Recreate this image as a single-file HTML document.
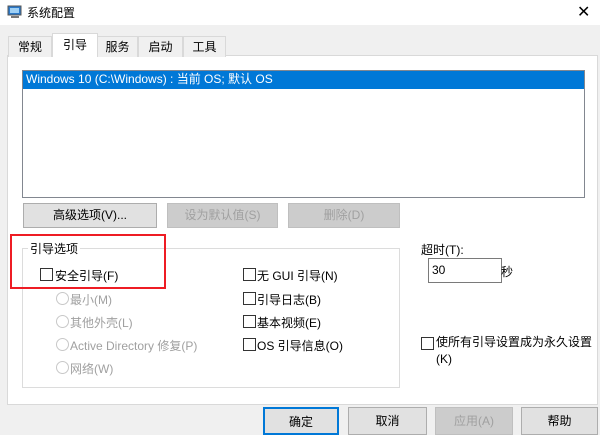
<!DOCTYPE html>
<html><head><meta charset="utf-8"><style>
*{margin:0;padding:0;box-sizing:border-box}
body{width:600px;height:434px;overflow:hidden;background:#f0f0f0;font-family:"Liberation Sans","Noto Sans CJK SC",sans-serif;font-size:12px;color:#000;position:relative}
.a{position:absolute}
.title{left:0;top:0;width:600px;height:25px;background:#fff}
.tab{position:absolute;top:36px;height:21px;border:1px solid #d9d9d9;border-bottom:none;background:#f0f0f0;text-align:center;line-height:20px}
.btn{position:absolute;height:25px;border:1px solid #adadad;background:#e1e1e1;text-align:center;line-height:23px}
.dis{color:#a0a0a0;background:#cccccc;border-color:#bfbfbf}
.cb{position:absolute;width:13px;height:13px;border:1px solid #333;background:#fff}
.rd{position:absolute;width:13px;height:13px;border:1px solid #c8c8c8;border-radius:50%;background:#fff}
.g{color:#a0a0a0}
</style></head><body>
<div class="a title"></div>
<svg class="a" style="left:7px;top:4px" width="16" height="16"><rect x="1" y="2" width="13" height="9" fill="#2b79c9" stroke="#555"/><rect x="3" y="4" width="9" height="5" fill="#9fd0f5"/><rect x="4" y="12" width="8" height="2" fill="#777"/></svg>
<div class="a" style="left:27px;top:4px;font-size:12px">系统配置</div>
<div class="a" style="left:577px;top:2px;font-size:16px;font-weight:300">✕</div>
<div class="a" style="left:7px;top:55px;width:591px;height:350px;background:#fff;border:1px solid #d9d9d9"></div>
<div class="tab" style="left:8px;width:44px">常规</div>
<div class="tab" style="left:97px;width:41px">服务</div>
<div class="tab" style="left:138px;width:45px">启动</div>
<div class="tab" style="left:183px;width:43px">工具</div>
<div class="tab" style="left:52px;top:33px;height:24px;width:46px;background:#fff;line-height:22px">引导</div>
<div class="a" style="left:22px;top:70px;width:563px;height:128px;border:1px solid #828790;background:#fff"></div>
<div class="a" style="left:23px;top:71px;width:561px;height:18px;background:#0078d7;color:#fff;line-height:17px;padding-left:3px">Windows 10 (C:\Windows) : 当前 OS; 默认 OS</div>
<div class="btn" style="left:23px;top:203px;width:134px">高级选项(V)...</div>
<div class="btn dis" style="left:167px;top:203px;width:111px">设为默认值(S)</div>
<div class="btn dis" style="left:288px;top:203px;width:112px">删除(D)</div>
<div class="a" style="left:22px;top:248px;width:378px;height:140px;border:1px solid #dcdcdc"></div>
<div class="a" style="left:28px;top:240px;background:#fff;padding:0 2px">引导选项</div>
<div class="a" style="left:10px;top:234px;width:156px;height:55px;border:2px solid #ee1c24"></div>
<div class="cb" style="left:40px;top:268px"></div><div class="a" style="left:55px;top:267px">安全引导(F)</div>
<div class="rd" style="left:56px;top:292px"></div><div class="a g" style="left:70px;top:291px">最小(M)</div>
<div class="rd" style="left:56px;top:315px"></div><div class="a g" style="left:70px;top:314px">其他外壳(L)</div>
<div class="rd" style="left:56px;top:338px"></div><div class="a g" style="left:70px;top:337px">Active Directory 修复(P)</div>
<div class="rd" style="left:56px;top:361px"></div><div class="a g" style="left:70px;top:360px">网络(W)</div>
<div class="cb" style="left:243px;top:268px"></div><div class="a" style="left:257px;top:267px">无 GUI 引导(N)</div>
<div class="cb" style="left:243px;top:292px"></div><div class="a" style="left:257px;top:291px">引导日志(B)</div>
<div class="cb" style="left:243px;top:315px"></div><div class="a" style="left:257px;top:314px">基本视频(E)</div>
<div class="cb" style="left:243px;top:338px"></div><div class="a" style="left:257px;top:337px">OS 引导信息(O)</div>
<div class="a" style="left:421px;top:241px">超时(T):</div>
<div class="a" style="left:428px;top:258px;width:74px;height:25px;border:1px solid #7a7a7a;background:#fff;padding:4px 0 0 3px">30</div>
<div class="a" style="left:501px;top:263px">秒</div>
<div class="cb" style="left:421px;top:337px"></div>
<div class="a" style="left:436px;top:334px;line-height:17px">使所有引导设置成为永久设置<br>(K)</div>
<div class="btn" style="left:263px;top:407px;width:76px;height:28px;border:2px solid #0078d7;line-height:26px">确定</div>
<div class="btn" style="left:348px;top:407px;width:79px;height:28px;line-height:26px">取消</div>
<div class="btn dis" style="left:435px;top:407px;width:78px;height:28px;line-height:26px">应用(A)</div>
<div class="btn" style="left:521px;top:407px;width:77px;height:28px;line-height:26px">帮助</div>
</body></html>
